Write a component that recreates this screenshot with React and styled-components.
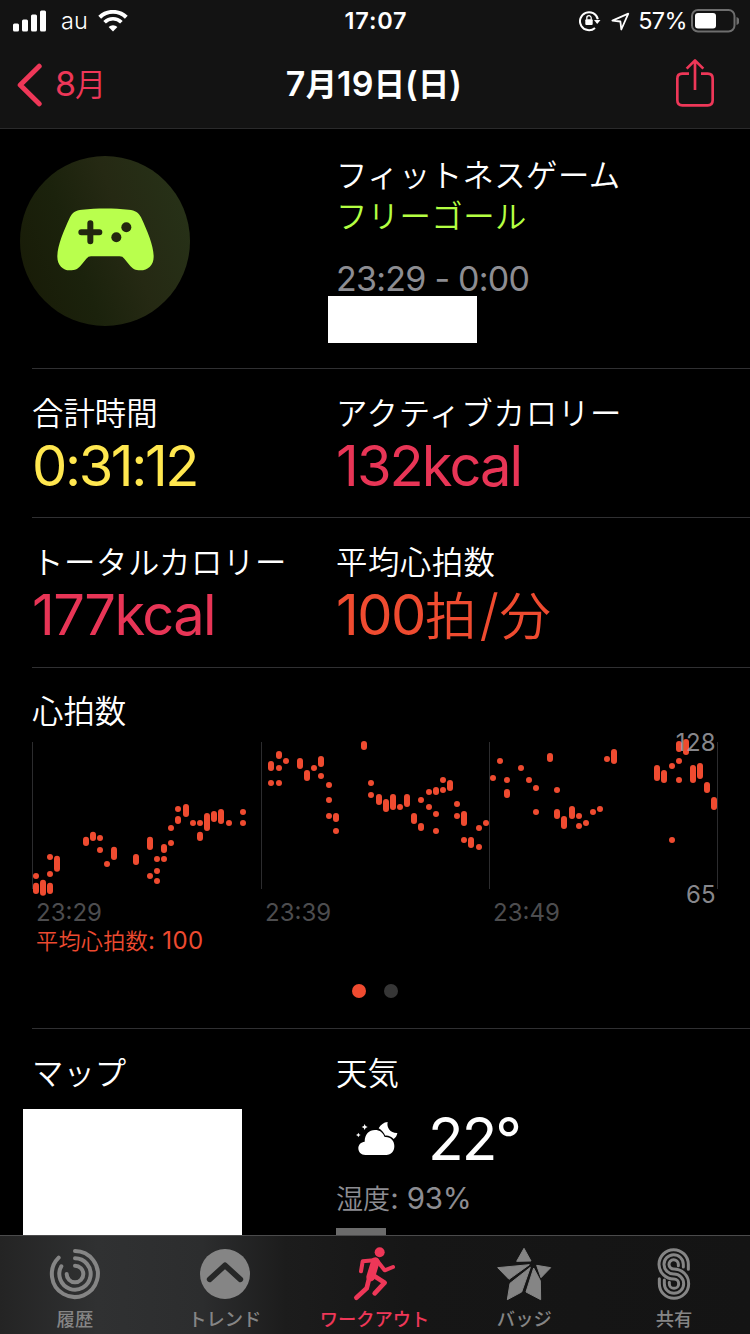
import styled, { createGlobalStyle } from "styled-components";

const GlobalStyle = createGlobalStyle`
  *, *::before, *::after {
    box-sizing: border-box;
  }

  body {
    margin: 0;
    background-color: #000;
    color: #fff;
    font-family: Inter, "Noto Sans CJK JP", sans-serif;
    overflow: hidden;
  }

  svg {
    display: block;
  }
`;

const Screen = styled.div`
  display: flex;
  flex-direction: column;
  width: 750px;
  height: 1334px;
  overflow: hidden;
`;

// Japanese glyphs run a little smaller than the Latin ones next to them
const Ja = styled.span`
  font-size: 0.92em;
  font-weight: ${(props) => props.$weight || "inherit"};
  letter-spacing: ${(props) => props.$spacing || 0}px;
`;

const TopBar = styled.header`
  height: 129px;
  background-color: #131313;
  border-bottom: 1px solid #2a2a2b;
`;

const StatusBar = styled.div`
  display: grid;
  grid-template-columns: 1fr auto 1fr;
  align-items: center;
  height: 40px;
  padding: 0 11px 0 13px;
  font-size: 23.5px;
  line-height: 42px;
`;

const StatusGroup = styled.div`
  display: flex;
  align-items: center;
  justify-content: ${(props) => (props.$end ? "flex-end" : "flex-start")};
`;

const Carrier = styled.span`
  margin: 0 10px 0 14px;
  font-weight: 300;
`;

const Clock = styled.span`
  font-weight: 600;
  letter-spacing: 0.8px;
`;

const StatusIcons = styled.div`
  display: flex;
  align-items: center;
  gap: 9px;
`;

const BatteryText = styled.span`
  margin: 0 4px 0 8px;
  letter-spacing: -0.6px;
`;

const NavBar = styled.nav`
  display: grid;
  grid-template-columns: 1fr auto 1fr;
  align-items: center;
  height: 88px;
  padding: 0 35px;
  font-size: 34px;
  line-height: 88px;
`;

const BackLink = styled.a`
  display: flex;
  align-items: center;
  gap: 12px;
  margin-left: -19px;
  letter-spacing: -1px;
  color: #ee3758;
`;

const Title = styled.h1`
  margin: 0 0 0 -2px;
  font-size: 34px;
  font-weight: 600;
  letter-spacing: 0.3px;
`;

const ShareButton = styled.button`
  justify-self: end;
  margin-bottom: 4px;
  padding: 0;
  border: none;
  background: none;
`;

const Content = styled.main`
  height: 1106px;
  padding-left: 32px;
  overflow: hidden;
`;

const Section = styled.section`
  display: grid;
  grid-template-columns: 304px 1fr;
  height: ${(props) => props.$height}px;
  border-bottom: 1px solid #303032;
`;

const ActivityBadge = styled.div`
  display: flex;
  align-items: center;
  justify-content: center;
  width: 170px;
  height: 170px;
  margin: 27px 0 0 -12px;
  padding-bottom: 3px;
  border-radius: 50%;
  background: linear-gradient(70deg, #181b07 5%, #1b220c 35%, #252913 60%, #273218 95%);
`;

const Details = styled.div`
  padding-top: 27px;
`;

const DetailLine = styled.p`
  margin: 0;
  height: 41px;
  font-size: 31.4px;
  font-weight: 350;
  line-height: 41px;
  letter-spacing: 0.4px;
  color: ${(props) => props.$color || "#fff"};
`;

const TimeRange = styled.p`
  margin: 20px 0 0;
  height: 38px;
  font-size: 34px;
  font-weight: 400;
  line-height: 42px;
  letter-spacing: -0.75px;
  color: #8d8d92;
`;

const Redacted = styled.div`
  width: ${(props) => props.$width}px;
  height: ${(props) => props.$height}px;
  margin-top: ${(props) => props.$top || 0}px;
  margin-left: ${(props) => props.$shift}px;
  background-color: #fff;
`;

const Metric = styled.div`
  padding-top: 25px;
`;

const Label = styled.h2`
  margin: 0;
  height: 40px;
  font-size: 31.4px;
  font-weight: 350;
  line-height: 40px;
  letter-spacing: ${(props) => props.$spacing || 0}px;
`;

const Value = styled.p`
  margin: 0;
  font-size: 56px;
  font-weight: 400;
  line-height: 64px;
  letter-spacing: ${(props) => props.$spacing || 0}px;
  white-space: nowrap;
  color: ${(props) => props.$color};
`;

const Slash = styled.span`
  margin: 0 2px 0 3px;
  font-weight: 300;
`;

const ChartSection = styled.section`
  height: 361px;
  padding-top: 24px;
  border-bottom: 1px solid #303032;
`;

const ChartArea = styled.div`
  position: relative;
  width: 690px;
  height: 167px;
  margin-top: -1px;
`;

const Bound = styled.span`
  position: absolute;
  right: 6px;
  top: ${(props) => props.$top}px;
  font-size: 24px;
  line-height: 30px;
  letter-spacing: 0.3px;
  color: rgba(160, 160, 166, 0.85);
`;

const TimeAxis = styled.div`
  display: grid;
  grid-template-columns: 229px 228px 1fr;
  height: 28px;
  padding-left: 4px;
  font-size: 24px;
  line-height: 30px;
  color: #4d4d4f;
`;

const Average = styled.p`
  margin: 0;
  height: 28px;
  padding-left: 4px;
  font-size: 24px;
  line-height: 30px;
  letter-spacing: 0.4px;
  color: #ed4a30;
`;

const Pager = styled.div`
  display: flex;
  justify-content: center;
  gap: 18px;
  margin: 30px 32px 0 0;
`;

const PagerDot = styled.span`
  width: 14px;
  height: 14px;
  border-radius: 50%;
  background-color: ${(props) => (props.$active ? "#ef4b30" : "#363636")};
`;

const Weather = styled.div`
  display: flex;
  align-items: center;
  height: 68px;
  margin-top: 11px;
  padding-left: 20px;
`;

const Temperature = styled.span`
  margin-left: 30px;
  font-size: 58.5px;
  line-height: 68px;
  letter-spacing: -2px;
`;

const Humidity = styled.p`
  margin: 2px 0 0;
  font-size: 29.5px;
  line-height: 46px;
  letter-spacing: -0.2px;
  color: #8d8d92;
`;

const CutOff = styled.div`
  width: 50px;
  height: 8px;
  margin-top: 5px;
  background-color: #6b6b6b;
`;

const TabBar = styled.nav`
  display: grid;
  grid-template-columns: repeat(5, 149.8px);
  height: 99px;
  border-top: 1px solid #4b4b4c;
  background: linear-gradient(90deg, #242424 0, #303132 13%, #2c2d2e 27%, #1c1c1c 38%, #161616 55%, #141414 100%);
`;

const Tab = styled.a`
  display: flex;
  flex-direction: column;
  align-items: center;
  padding-top: 8px;
  color: ${(props) => (props.$active ? "#ee3758" : "#858585")};
`;

const IconSlot = styled.span`
  display: flex;
  align-items: center;
  justify-content: center;
  height: 59px;
`;

const TabLabel = styled.span`
  margin-top: 2px;
  font-size: 18.3px;
  font-weight: 500;
  line-height: 28px;
  white-space: nowrap;
`;

// Each column is [x, ...marks]; a mark is a single reading or a [top, bottom] range
const READINGS = [
  {
    offset: 0,
    columns: [
      [48, 438, [458, 492]],
      [69, [449, 497]],
      [90, 381, 432, [458, 492]],
      [111, [377, 425]],
      [198, [320, 348]],
      [219, [305, 333]],
      [240, 324, 360],
      [261, 402],
      [282, [350, 390]],
      [348, [372, 405]],
      [390, [320, 360], 438],
      [411, 387, 423, 453],
      [432, [342, 369], 387],
      [453, 294, 339],
      [474, 237, [258, 282]],
      [498, [222, 261]],
      [519, 279],
      [540, 279, [305, 333]],
      [561, [249, 303]],
      [582, [243, 276]],
      [603, [237, 282]],
      [627, 279],
      [669, 246, 279],
    ],
  },
  {
    offset: 690,
    columns: [
      [63, [93, 123], 159],
      [87, [63, 87], 114, 159],
      [108, 93],
      [150, [84, 117]],
      [171, [120, 153]],
      [192, 114],
      [213, [78, 111], 138],
      [237, 165, 210, 258],
      [258, [249, 276], 303],
      [342, [33, 60]],
      [363, 159, 195],
      [387, [192, 225]],
      [408, [207, 246]],
      [429, [192, 240]],
      [450, 231],
      [471, [192, 231]],
      [492, [249, 282]],
      [513, 210, [279, 303]],
      [537, 186, 231],
      [558, [171, 195], 252, 303],
      [579, 150, 180],
      [600, [150, 183]],
      [621, 222, 258],
      [642, [243, 288], 330],
      [663, [321, 354]],
      [687, 294, 351],
      [708, 279],
    ],
  },
  {
    offset: 1380,
    columns: [
      [39, 144],
      [60, 93],
      [81, 150, [177, 204]],
      [123, 114],
      [147, 150],
      [168, 174, 246],
      [210, [69, 96]],
      [231, 180, [237, 267]],
      [252, [258, 297]],
      [276, [228, 267]],
      [297, 258, 288],
      [318, 279],
      [339, 246],
      [360, 237],
      [381, 87],
      [402, [57, 102]],
      [531, [105, 153]],
      [552, [120, 159]],
      [576, 108, 330],
      [597, [33, 66], 93, 150],
      [618, [27, 75]],
      [639, [105, 159]],
      [660, [99, 147]],
      [681, [156, 189]],
      [702, [201, 240]],
    ],
  },
];

function HeartRateChart() {
  return (
    <svg width="690" height="167" viewBox="36 3 2070 501">
      {[37.5, 724.5, 1408.5, 2092.5].map((x) => (
        <path key={x} d={`M${x} 36V477`} stroke="#2c2c2e" strokeWidth="3" />
      ))}
      {READINGS.map(({ offset, columns }) =>
        columns.map(([x, ...marks]) =>
          marks.map((mark) => {
            const [top, bottom] = Array.isArray(mark) ? mark : [mark - 9, mark + 9];
            return (
              <rect
                key={`${offset}-${x}-${top}`}
                x={offset + x - 9}
                y={top}
                width="18"
                height={bottom - top}
                rx="9"
                fill="#ef4b30"
              />
            );
          })
        )
      )}
    </svg>
  );
}

function SignalIcon() {
  return (
    <svg width="34" height="22" viewBox="0 0 34 22" fill="#fff">
      <rect x="0" y="13.5" width="6" height="8" rx="1.5" />
      <rect x="9" y="9.5" width="6" height="12" rx="1.5" />
      <rect x="18" y="4.5" width="6" height="17" rx="1.5" />
      <rect x="27" y="0.5" width="6" height="21" rx="1.5" />
    </svg>
  );
}

function WifiIcon() {
  return (
    <svg width="30" height="22" viewBox="0 0 30 22" fill="none" stroke="#fff">
      <path d="M1.7 7.3a19 19 0 0 1 26.6 0" strokeWidth="4" />
      <path d="M6.6 12.2a12 12 0 0 1 16.8 0" strokeWidth="3.7" />
      <path d="M15 21.5l-4.4-4.4a6.3 6.3 0 0 1 8.8 0z" fill="#fff" stroke="none" />
    </svg>
  );
}

function RotationLockIcon() {
  return (
    <svg width="23" height="22" viewBox="0 0 23 22" fill="none" stroke="#fff" strokeWidth="2">
      <path d="M18.8 9.3A9 9 0 1 0 16 17.9" />
      <path d="M15 10h6.5l-3.3 3.9z" fill="#fff" stroke="none" />
      <rect x="6.3" y="9.3" width="7.4" height="5.8" rx="1" fill="#fff" stroke="none" />
      <path d="M7.8 9.8V7.9a2.2 2.2 0 0 1 4.4 0v1.9" strokeWidth="1.3" />
    </svg>
  );
}

function LocationIcon() {
  return (
    <svg width="19" height="19" viewBox="0 0 19 19" fill="none" stroke="#fff" strokeWidth="1.8">
      <path d="M17.3 1.7L1.4 8.6l8 .9.9 8z" strokeLinejoin="round" />
    </svg>
  );
}

function BatteryIcon() {
  return (
    <svg width="48" height="24" viewBox="0 0 48 24">
      <rect x="1" y="1" width="42.5" height="21.5" rx="6" fill="none" stroke="#6e6e6e" strokeWidth="2" />
      <rect x="4" y="4" width="21" height="15.5" rx="3" fill="#fff" />
      <path d="M45.5 8a4.2 4.2 0 0 1 0 8z" fill="#6e6e6e" />
    </svg>
  );
}

function BackIcon() {
  return (
    <svg width="27" height="44" viewBox="0 0 27 44" fill="none" stroke="currentColor">
      <path d="M23.2 3.2L4.2 22l19 18.8" strokeWidth="5" strokeLinecap="round" strokeLinejoin="round" />
    </svg>
  );
}

function ShareIcon() {
  return (
    <svg width="40" height="50" viewBox="900 174 120 150" fill="none" stroke="#ee3758" strokeWidth="8">
      <path d="M942 221h-20q-15 0-15 15v65q0 15 15 15h76q15 0 15-15v-65q0-15-15-15h-20" />
      <path d="M960 270v-88M935 206l25-25 25 25" strokeLinejoin="round" />
    </svg>
  );
}

function GameControllerIcon() {
  return (
    <svg width="97" height="63" viewBox="170 206 291 189">
      <path
        d="M171 352C171 320 190 275 209 234C216 219 225 213 245 211C290 206 340 206 385 211C405 213 415 219 422 234C441 275 460 320 460 352C460 377 443 393 420 393C405 393 397 389 388 378L372 358Q367 351 358 351H272Q264 351 258 358L242 378C233 389 225 393 208 393C188 393 171 377 171 352Z"
        fill="#b9ff4d"
      />
      <path d="M243 279h54M270 252v54" stroke="#22260f" strokeWidth="18" strokeLinecap="round" />
      <circle cx="378" cy="264" r="15" fill="#22260f" />
      <circle cx="348" cy="294" r="15" fill="#22260f" />
    </svg>
  );
}

function CloudMoonIcon() {
  return (
    <svg width="42" height="36" viewBox="167 453 126 108" fill="#fff">
      <path d="M195 555C182 555 174 546 174 535C174 524 182 516 193 515C193 493 206 480 224 480C238 480 248 488 253 501C270 499 282 512 282 528C282 544 272 555 258 555Z" />
      <path d="M262 456C258 472 270 490 291 489C290 497 286 503 280 507C273 500 264 496 255 497C250 487 243 479 235 475C241 464 250 457 262 456Z" />
      <path d="M193 462q1 8 9 9q-8 1-9 9q-1-8-9-9q8-1 9-9zM174 488q1 6 7 7q-6 1-7 7q-1-6-7-7q6-1 7-7z" />
    </svg>
  );
}

function HistoryIcon() {
  return (
    <svg width="52" height="52" viewBox="147 69 156 156" fill="none" stroke="currentColor" strokeWidth="12" strokeLinecap="round">
      <path d="M225 78A69 69 0 1 1 176 98" />
      <path d="M225 100A47 47 0 1 1 184 124" />
      <path d="M225 122A25 25 0 1 1 200 147" />
    </svg>
  );
}

function TrendsIcon() {
  return (
    <svg width="52" height="52" viewBox="594 69 156 156">
      <circle cx="672" cy="147" r="75" fill="currentColor" />
      <path d="M626 163l46-42 46 42" fill="none" stroke="#262727" strokeWidth="17" strokeLinecap="round" strokeLinejoin="round" />
    </svg>
  );
}

function WorkoutIcon() {
  return (
    <svg width="52" height="56" viewBox="1044 63 156 168" fill="none" stroke="currentColor" strokeLinecap="round" strokeLinejoin="round">
      <circle cx="1139" cy="82" r="15" fill="currentColor" stroke="none" />
      <path d="M1083 139l5-30 34-3" strokeWidth="12" />
      <path d="M1126 110l-14 46" strokeWidth="26" />
      <path d="M1132 108l22 28 25-10" strokeWidth="12" />
      <path d="M1108 158l-8 32-31 28" strokeWidth="14" />
      <path d="M1118 150l36 23-30 32" strokeWidth="14" />
    </svg>
  );
}

function BadgeIcon() {
  return (
    <svg width="56" height="56" viewBox="363 66 168 168" fill="currentColor" stroke="currentColor" strokeWidth="3" strokeLinejoin="round">
      <path d="M447 73l21 38-43 1z" />
      <path d="M368 131l95-9-61 44z" />
      <path d="M485 124l42 7-29 30z" />
      <path d="M466 130l-26 74-43 23 8-49z" />
      <path d="M476 132l20 38 1 57-44-23z" />
    </svg>
  );
}

function SharingIcon() {
  const stripes = [
    [44, 14, 15],
    [29, 29, 8],
    [14, 44, 4],
  ];
  return (
    <svg width="34" height="54" viewBox="849 66 102 162" fill="none" stroke="currentColor" strokeWidth="9" strokeLinecap="round">
      {stripes.map(([upper, lower, tail]) => (
        <path
          key={upper}
          d={`M${900 + upper - 1} ${118 + tail}V118A${upper} ${upper} 0 1 0 900 ${118 + upper}A${lower} ${lower} 0 1 1 ${900 - lower} 176V${176 - (19 - tail)}`}
        />
      ))}
    </svg>
  );
}

const TABS = [
  { label: "履歴", Icon: HistoryIcon },
  { label: "トレンド", Icon: TrendsIcon },
  { label: "ワークアウト", Icon: WorkoutIcon, active: true },
  { label: "バッジ", Icon: BadgeIcon },
  { label: "共有", Icon: SharingIcon },
];

export default function App() {
  return (
    <Screen>
      <GlobalStyle />
      <TopBar>
        <StatusBar>
          <StatusGroup>
            <SignalIcon />
            <Carrier>au</Carrier>
            <WifiIcon />
          </StatusGroup>
          <Clock>17:07</Clock>
          <StatusGroup $end>
            <StatusIcons>
              <RotationLockIcon />
              <LocationIcon />
            </StatusIcons>
            <BatteryText>57%</BatteryText>
            <BatteryIcon />
          </StatusGroup>
        </StatusBar>
        <NavBar>
          <BackLink>
            <BackIcon />
            <span>
              8<Ja $weight={350}>月</Ja>
            </span>
          </BackLink>
          <Title>
            7<Ja>月</Ja>19<Ja>日</Ja>(<Ja>日</Ja>)
          </Title>
          <ShareButton aria-label="共有">
            <ShareIcon />
          </ShareButton>
        </NavBar>
      </TopBar>

      <Content>
        <Section $height={240}>
          <ActivityBadge>
            <GameControllerIcon />
          </ActivityBadge>
          <Details>
            <DetailLine>フィットネスゲーム</DetailLine>
            <DetailLine $color="#b4ff42">フリーゴール</DetailLine>
            <TimeRange>23:29 - 0:00</TimeRange>
            <Redacted $width={149} $height={47} $shift={-8} />
          </Details>
        </Section>

        <Section $height={149}>
          <Metric>
            <Label>合計時間</Label>
            <Value $color="#ffe74f" $spacing={-2.4}>0:31:12</Value>
          </Metric>
          <Metric>
            <Label $spacing={0.8}>アクティブカロリー</Label>
            <Value $color="#e83556" $spacing={-1.9}>132kcal</Value>
          </Metric>
        </Section>

        <Section $height={150}>
          <Metric>
            <Label $spacing={0.6}>トータルカロリー</Label>
            <Value $color="#e83556" $spacing={-1.6}>177kcal</Value>
          </Metric>
          <Metric>
            <Label $spacing={0.5}>平均心拍数</Label>
            <Value $color="#ef4b30" $spacing={-1.5}>
              100<Ja $weight={350}>拍</Ja>
              <Slash>/</Slash>
              <Ja $weight={350}>分</Ja>
            </Value>
          </Metric>
        </Section>

        <ChartSection>
          <Label>心拍数</Label>
          <ChartArea>
            <HeartRateChart />
            <Bound $top={-3}>128</Bound>
            <Bound $top={149}>65</Bound>
          </ChartArea>
          <TimeAxis>
            <span>23:29</span>
            <span>23:39</span>
            <span>23:49</span>
          </TimeAxis>
          <Average>
            <Ja $weight={350} $spacing={0.3}>平均心拍数</Ja>: 100
          </Average>
          <Pager>
            <PagerDot $active />
            <PagerDot />
          </Pager>
        </ChartSection>

        <Section $height={260}>
          <Metric>
            <Label>マップ</Label>
            <Redacted $width={219} $height={160} $top={15} $shift={-9} />
          </Metric>
          <Metric>
            <Label>天気</Label>
            <Weather>
              <CloudMoonIcon />
              <Temperature>22°</Temperature>
            </Weather>
            <Humidity>
              <Ja $weight={350}>湿度</Ja>: 93%
            </Humidity>
            <CutOff />
          </Metric>
        </Section>
      </Content>

      <TabBar>
        {TABS.map(({ label, Icon, active }) => (
          <Tab key={label} $active={active}>
            <IconSlot>
              <Icon />
            </IconSlot>
            <TabLabel>{label}</TabLabel>
          </Tab>
        ))}
      </TabBar>
    </Screen>
  );
}
